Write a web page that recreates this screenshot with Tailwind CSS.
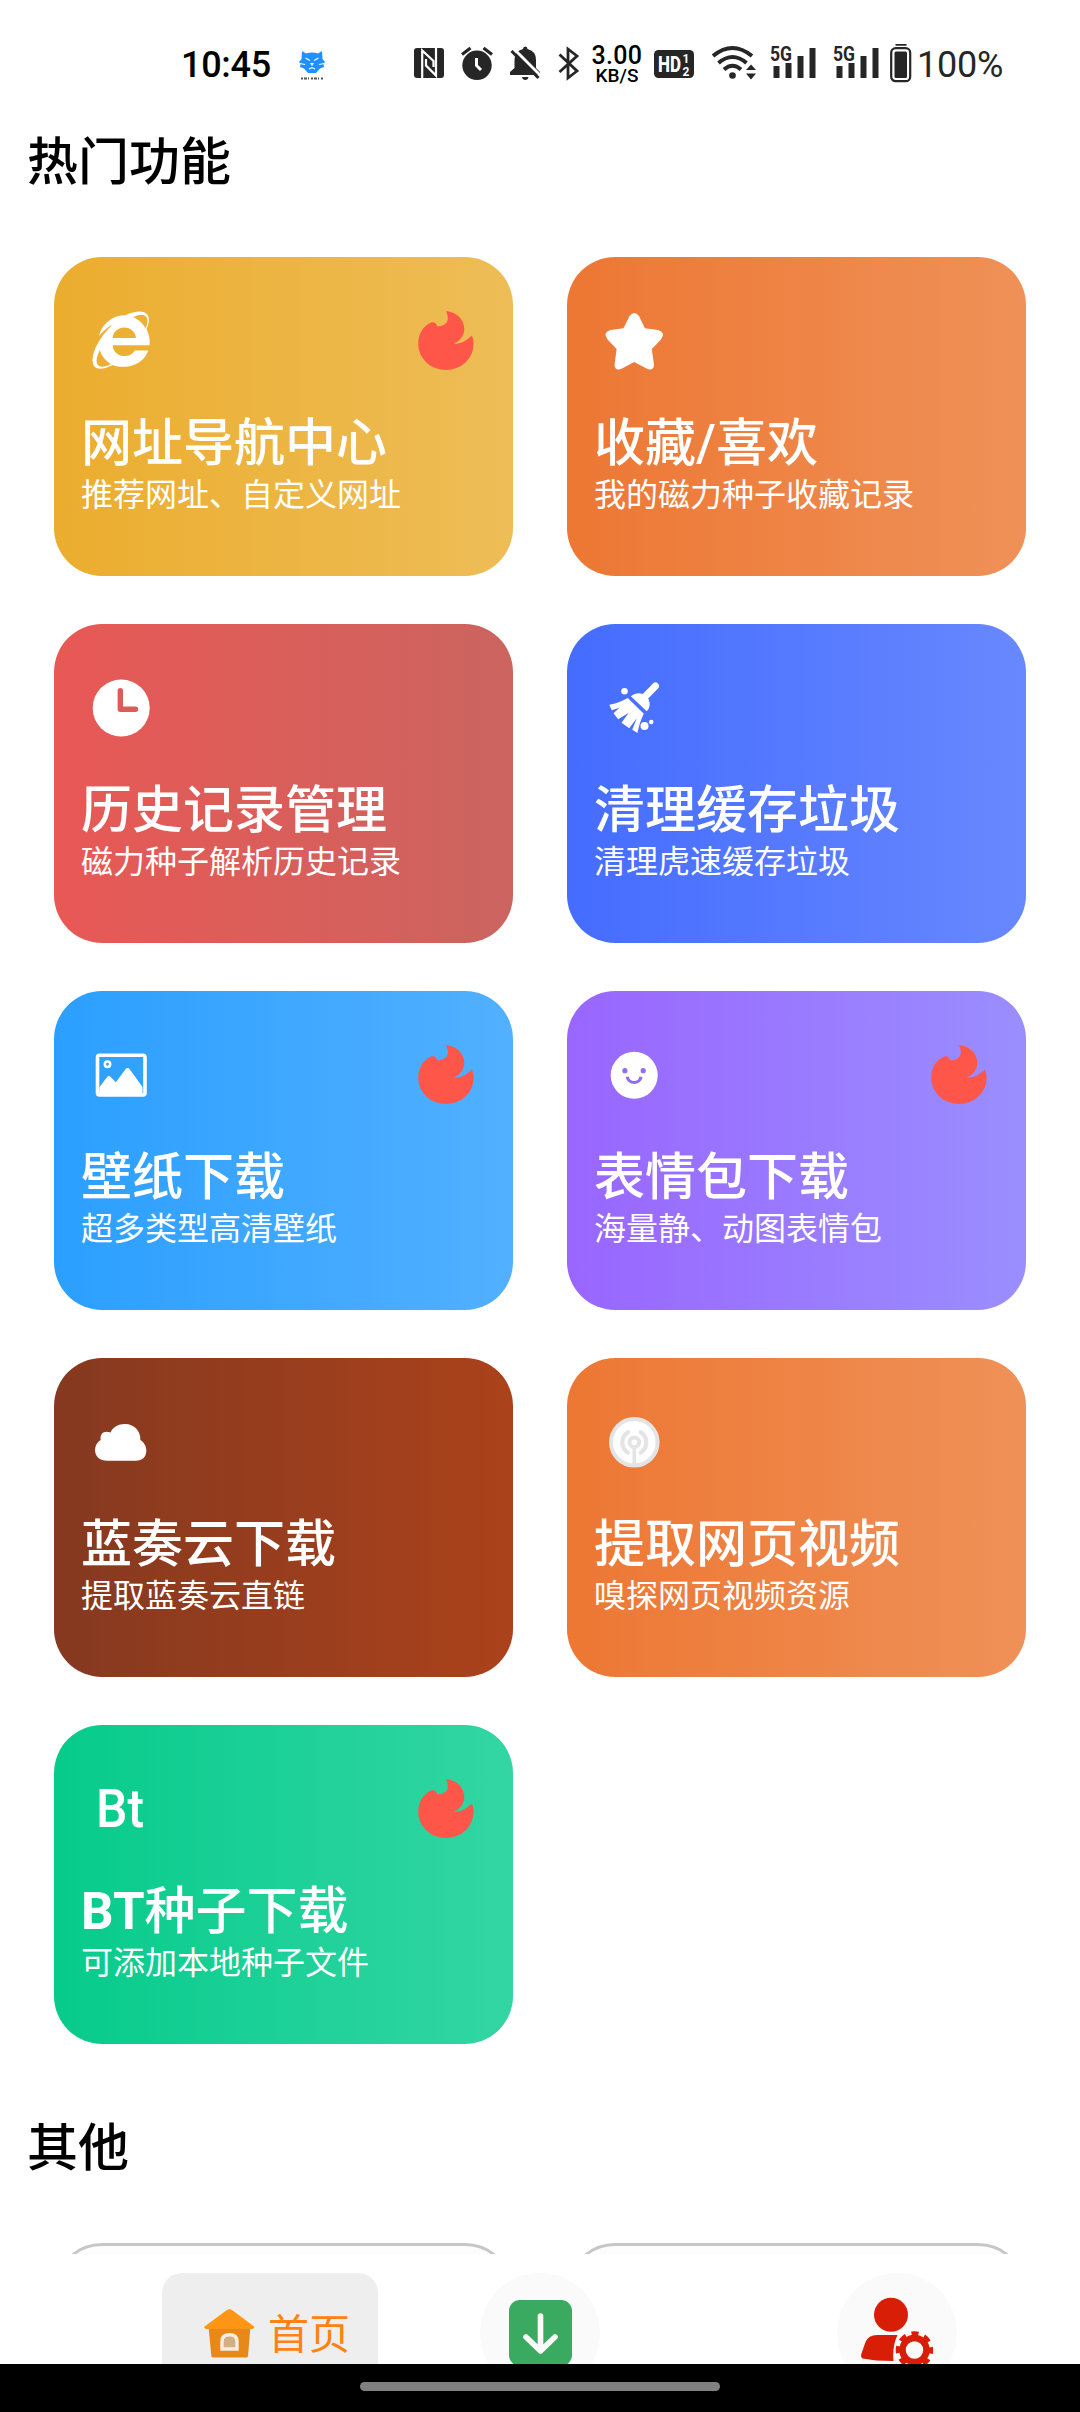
<!DOCTYPE html>
<html lang="zh-CN">

<head>
    <meta charset="UTF-8">
    <meta name="viewport" content="width=device-width, initial-scale=1.0">
    <title>热门功能</title>
    <script src="https://cdn.jsdelivr.net/npm/@tailwindcss/browser@4"></script>
</head>

<body class="h-[2412px] w-[1080px] flex flex-col overflow-hidden bg-white text-black font-['Roboto','Noto_Sans_CJK_SC',sans-serif]">

    <!-- shared flame badge -->
    <svg class="hidden">
        <symbol id="fire" viewBox="0 0 72 72">
            <path fill="#ff564a" d="M36 6C47 7 54.3 15 54.3 24C54.3 31 49 37 43.3 38.6C51 39.5 57 35 61.9 30.5C63 33 63.6 36 63.6 39A27.7 26 0 0 1 8.2 39C8.2 29 13 21 21.6 17.3C24.5 16.8 26.5 18 27 21.3C33 21.5 37.5 18.5 37.8 14C38 11 37 8.5 36 6Z" />
        </symbol>
    </svg>

    <!-- status bar -->
    <header class="h-32 shrink-0 flex items-center pl-[181px] text-[#262626]">
        <span class="w-[118px] pt-0.5 text-[36px] leading-10 tracking-[-0.3px] font-medium text-black">10:45</span>
        <svg class="w-[26px] h-10" viewBox="0 0 26 40">
            <path fill="#1e90ff" d="M3 7L7 9.500Q13 7.500 19 9.500L23 7L23.500 15L26 18L24.500 19.500L25 23L21 24.500L17 29H9L5 24.500L1 23L1.500 19.500L0 18L2.500 15Z" />
            <path fill="none" stroke="#fff" stroke-width="1.100" d="M6.500 14L11 16.500M19.500 14L15 16.500M1 19.500L6 20.500M25 19.500L20 20.500M10 25L13 23.500L16 25" />
            <path fill="#fff" d="M11 19H15L13 22Z" />
            <path stroke="#555" stroke-width="2" stroke-dasharray="2 1 3 1 1 2" d="M2 34.500H24" />
        </svg>
        <svg class="w-[30px] h-10 ml-[89px]" viewBox="0 0 30 40">
            <rect y="4" width="30" height="30" rx="3" fill="currentColor" />
            <path fill="none" stroke="#fff" stroke-width="2.200" d="M8.200 34V6.500L19.500 17V23M22 4V31.500L12 21.500V15" />
        </svg>
        <svg class="w-[32px] h-10 ml-[17px]" viewBox="0 0 32 40">
            <circle cx="16" cy="21.300" r="14.700" fill="currentColor" />
            <path stroke="currentColor" stroke-width="3.200" d="M1 10.500L9.500 4M31 10.500L22.500 4" />
            <path fill="none" stroke="#fff" stroke-width="3" d="M15.500 14V21.500L20 26" />
        </svg>
        <svg class="w-[31px] h-10 ml-[17px]" viewBox="0 0 31 40">
            <path fill="currentColor" d="M13 5Q13 2.500 15.300 2.500T17.500 5Q26 7 26 16V24L30 28V31H0V28L4.500 24V16Q4.500 7 13 5ZM12 33H18.500Q18 36 15.300 36T12 33Z" />
            <path stroke="#fff" stroke-width="3" d="M4 5L31 32" />
            <path stroke="currentColor" stroke-width="3" d="M1.500 7L28.500 34" />
        </svg>
        <svg class="w-[22px] h-10 ml-[17px]" viewBox="0 0 22 40">
            <path fill="none" stroke="currentColor" stroke-width="2.800" d="M1.500 10.500L19 27L10 34V5L19 12L1.500 28" />
        </svg>
        <div class="ml-[11px] mr-px w-[52px] pt-0.5 flex flex-col items-center font-medium text-black">
            <span class="text-[25px] leading-[21px] tracking-[0.3px]">3.00</span>
            <span class="text-[19px] leading-[19px]">KB/S</span>
        </div>
        <svg class="w-10 h-10 ml-[10px]" viewBox="0 0 40 40">
            <rect y="6" width="40" height="28" rx="4.500" fill="currentColor" />
            <text x="4" y="28" font-size="22" font-weight="800" fill="#fff" textLength="23" lengthAdjust="spacingAndGlyphs">HD</text>
            <text x="28.500" y="19" font-size="12" font-weight="700" fill="#fff">1</text>
            <text x="28.500" y="31.500" font-size="12" font-weight="700" fill="#fff">2</text>
        </svg>
        <svg class="w-11 h-10 ml-[18px]" viewBox="0 0 44 40">
            <path fill="none" stroke="currentColor" stroke-width="4" d="M1 12Q20.500 -4 40 12M6.500 19Q20.500 7 34.500 19M12 25.500Q20.500 18 29 25.500" />
            <circle cx="20.500" cy="31.500" r="3.300" fill="currentColor" />
            <path fill="currentColor" d="M34 26L39 20.500L44 26ZM34 29.500H44L39 35.500Z" />
        </svg>
        <svg class="w-[47px] h-10 ml-[14px] overflow-visible" viewBox="0 0 47 40">
            <text x="0" y="17" font-size="21" font-weight="700" fill="currentColor" textLength="22" lengthAdjust="spacingAndGlyphs">5G</text>
            <path stroke="currentColor" stroke-width="6" d="M6.500 22V34M18.500 19V34M30.500 12V34M42.500 4V34" />
        </svg>
        <svg class="w-[47px] h-10 ml-4 overflow-visible" viewBox="0 0 47 40">
            <text x="0" y="17" font-size="21" font-weight="700" fill="currentColor" textLength="22" lengthAdjust="spacingAndGlyphs">5G</text>
            <path stroke="currentColor" stroke-width="6" d="M6.500 22V34M18.500 19V34M30.500 12V34M42.500 4V34" />
        </svg>
        <svg class="w-[22px] h-10 ml-[10px]" viewBox="0 0 22 40">
            <path stroke="currentColor" stroke-width="2.500" d="M5.500 .5H16.500" />
            <rect x="1.200" y="4.200" width="19" height="33" rx="4.500" fill="none" stroke="currentColor" stroke-width="2.200" />
            <rect x="4.500" y="7.500" width="12.500" height="26.500" rx="1.500" fill="currentColor" />
        </svg>
        <span class="ml-[5px] pt-0.5 text-[36px] leading-10 tracking-[-0.2px]">100%</span>
    </header>

    <main class="flex-1 min-h-0 overflow-hidden">
        <h1 class="h-16 pt-[3px] pl-[27px] text-[51px] leading-16 font-medium">热门功能</h1>

        <div class="mt-[65px] px-[54px] grid grid-cols-2 gap-x-[54px] gap-y-12 text-white">

            <div class="h-[319px] rounded-[48px] pt-12 bg-linear-to-r/srgb from-[#ebad2e] to-[#eebd57]">
                <div class="flex justify-between px-[31px]">
                    <svg class="size-[72px]" viewBox="0 0 72 72">
                        <path fill="#fff" transform="translate(7.500 6.500) scale(.1118)" d="M483.049 159.706c10.855-24.575 21.424-60.438 21.424-87.871 0-72.722-79.641-98.371-209.673-38.577-107.632-7.181-211.221 73.670-237.098 186.457 30.852-34.862 78.271-82.298 121.977-101.158C125.404 166.850 79.128 228.002 43.992 291.725 23.246 329.651 0 390.940 0 436.747c0 98.575 92.854 86.500 180.251 42.006 31.423 15.430 66.559 15.573 101.695 15.573 97.124 0 184.249-54.294 216.814-146.022H377.927c-52.509 88.593-196.819 52.996-196.819-47.436H509.900c6.407-43.581-1.655-95.715-26.851-141.162zM64.559 346.877c17.711 51.150 53.703 95.871 100.266 123.304-88.741 48.940-173.267 29.096-100.266-123.304zm115.977-108.873c2-55.152 50.276-94.871 103.980-94.871 53.418 0 101.981 39.720 103.981 94.871H180.536zm184.536-187.600c21.425-10.287 48.563-22.003 72.558-22.003 31.422 0 54.274 21.717 54.274 53.722 0 20.003-7.427 49.007-14.569 67.867-26.280-42.292-65.986-81.584-112.263-99.586z" />
                    </svg>
                    <svg class="size-[72px]"><use href="#fire" /></svg>
                </div>
                <h2 class="mt-[39px] pl-[27px] text-[51px] leading-14 font-medium">网址导航中心</h2>
                <p class="-mt-px pl-[27px] text-[32px] leading-12">推荐网址、自定义网址</p>
            </div>

            <div class="h-[319px] rounded-[48px] pt-12 bg-linear-to-r/srgb from-[#ed7733] to-[#ef9158]">
                <div class="flex justify-between px-[31px]">
                    <svg class="size-[72px]" viewBox="0 0 72 72">
                        <path fill="#fff" d="M25.500 23.300L31.500 11Q36.200 5 41 11L46.900 23.300L60 25Q68 27.500 63 34.500L53.800 44L56 60Q55.500 66.500 48.500 63.500L36.200 57L24 63.500Q17 66.500 16.500 60L18.600 44L9.500 34.500Q4.500 27.500 12.500 25Z" />
                    </svg>
                </div>
                <h2 class="mt-[39px] pl-[27px] text-[51px] leading-14 font-medium">收藏/喜欢</h2>
                <p class="-mt-px pl-[27px] text-[32px] leading-12">我的磁力种子收藏记录</p>
            </div>

            <div class="h-[319px] rounded-[48px] pt-12 bg-linear-to-r/srgb from-[#e85855] to-[#cb645f]">
                <div class="flex justify-between px-[31px]">
                    <svg class="size-[72px]" viewBox="0 0 72 72">
                        <circle cx="36.200" cy="36" r="28.500" fill="#fff" />
                        <path fill="none" stroke="#dc5c58" stroke-width="5.400" stroke-linecap="round" stroke-linejoin="round" d="M35.300 18.700V37.300H50.500" />
                    </svg>
                </div>
                <h2 class="mt-[39px] pl-[27px] text-[51px] leading-14 font-medium">历史记录管理</h2>
                <p class="-mt-px pl-[27px] text-[32px] leading-12">磁力种子解析历史记录</p>
            </div>

            <div class="h-[319px] rounded-[48px] pt-12 bg-linear-to-r/srgb from-[#446cff] to-[#6888ff]">
                <div class="flex justify-between px-[31px]">
                    <svg class="size-[72px]" viewBox="0 0 72 72" fill="#fff">
                        <path stroke="#fff" stroke-width="7" stroke-linecap="round" d="M57.500 14L46.500 25.300" />
                        <path d="M32.800 24.300Q38 19.500 45 22L50.500 27.300Q53.500 34 48.800 39.300Z" />
                        <path d="M29.800 26L45.800 41.700Q41.500 50 39.500 61L34.200 57.700L38.800 46.300L31.200 56.300L23.500 50.700L30.800 40.700L20.200 47.300L15.500 41.300L21.500 35.700L13.800 38.300L11.200 32.700Q21 31 29.800 26Z" />
                        <circle cx="26.500" cy="19.300" r="3.300" />
                        <circle cx="46.500" cy="54" r="4" />
                        <circle cx="53.200" cy="50" r="2.300" />
                    </svg>
                </div>
                <h2 class="mt-[39px] pl-[27px] text-[51px] leading-14 font-medium">清理缓存垃圾</h2>
                <p class="-mt-px pl-[27px] text-[32px] leading-12">清理虎速缓存垃圾</p>
            </div>

            <div class="h-[319px] rounded-[48px] pt-12 bg-linear-to-r/srgb from-[#2b9fff] to-[#52b0ff]">
                <div class="flex justify-between px-[31px]">
                    <svg class="size-[72px]" viewBox="0 0 72 72">
                        <rect x="12.500" y="16.300" width="47.500" height="39.700" rx="2" fill="none" stroke="#fff" stroke-width="3.600" />
                        <circle cx="22.500" cy="25.300" r="2.700" fill="none" stroke="#fff" stroke-width="2.500" />
                        <path fill="#fff" d="M14.500 48L22.200 38Q24 36 25.700 38L30.800 43.300L40.500 30.300Q42.500 27.500 44.700 30.300L57.500 48V56H14Z" />
                    </svg>
                    <svg class="size-[72px]"><use href="#fire" /></svg>
                </div>
                <h2 class="mt-[39px] pl-[27px] text-[51px] leading-14 font-medium">壁纸下载</h2>
                <p class="-mt-px pl-[27px] text-[32px] leading-12">超多类型高清壁纸</p>
            </div>

            <div class="h-[319px] rounded-[48px] pt-12 bg-linear-to-r/srgb from-[#9966ff] to-[#9a8eff]">
                <div class="flex justify-between px-[31px]">
                    <svg class="size-[72px]" viewBox="0 0 72 72">
                        <circle cx="36.200" cy="36.300" r="23.500" fill="#fff" />
                        <g fill="#926eee">
                            <circle cx="26.900" cy="31.700" r="2.600" />
                            <circle cx="45.200" cy="31.700" r="2.600" />
                        </g>
                        <path fill="none" stroke="#926eee" stroke-width="3.200" d="M29.300 37.700A6.900 6.600 0 0 0 43 37.700" />
                    </svg>
                    <svg class="size-[72px]"><use href="#fire" /></svg>
                </div>
                <h2 class="mt-[39px] pl-[27px] text-[51px] leading-14 font-medium">表情包下载</h2>
                <p class="-mt-px pl-[27px] text-[32px] leading-12">海量静、动图表情包</p>
            </div>

            <div class="h-[319px] rounded-[48px] pt-12 bg-linear-to-r/srgb from-[#853920] to-[#ab421b]">
                <div class="flex justify-between px-[31px]">
                    <svg class="size-[72px]" viewBox="0 0 72 72">
                        <path fill="#fff" d="M22 54.700C8 54.700 7 39 15.700 34C14.500 28 19 24 25.500 26.500C28 21 33 18 40 18C50 18 56 26 55.300 34C64 39 64 54.700 51 54.700Z" />
                    </svg>
                </div>
                <h2 class="mt-[39px] pl-[27px] text-[51px] leading-14 font-medium">蓝奏云下载</h2>
                <p class="-mt-px pl-[27px] text-[32px] leading-12">提取蓝奏云直链</p>
            </div>

            <div class="h-[319px] rounded-[48px] pt-12 bg-linear-to-r/srgb from-[#ed7733] to-[#ef9158]">
                <div class="flex justify-between px-[31px]">
                    <svg class="size-[72px]" viewBox="0 0 72 72" fill="none" stroke="#e4e4e4">
                        <circle cx="36.300" cy="36.300" r="23.300" fill="#fff" stroke-width="4" />
                        <circle cx="36.300" cy="36.300" r="4.800" stroke-width="4" />
                        <path stroke-width="3.800" d="M36.300 41V59" />
                        <path stroke-width="4.200" stroke-linecap="round" d="M30 26.300A12 12 0 0 0 30 46.700M42.600 26.300A12 12 0 0 1 42.600 46.700" />
                    </svg>
                </div>
                <h2 class="mt-[39px] pl-[27px] text-[51px] leading-14 font-medium">提取网页视频</h2>
                <p class="-mt-px pl-[27px] text-[32px] leading-12">嗅探网页视频资源</p>
            </div>

            <div class="h-[319px] rounded-[48px] pt-12 bg-linear-to-r/srgb from-[#06cb8b] to-[#33d6a3]">
                <div class="flex justify-between px-[31px]">
                    <svg class="size-[72px]" viewBox="0 0 72 72">
                        <text x="11" y="53.500" font-size="54" font-weight="500" fill="#fff" textLength="48" lengthAdjust="spacingAndGlyphs">Bt</text>
                    </svg>
                    <svg class="size-[72px]"><use href="#fire" /></svg>
                </div>
                <h2 class="mt-[39px] pl-[27px] text-[51px] leading-14 font-medium"><span class="font-bold">BT</span>种子下载</h2>
                <p class="-mt-px pl-[27px] text-[32px] leading-12">可添加本地种子文件</p>
            </div>
        </div>

        <h1 class="mt-[70px] h-16 pt-[3px] pl-[27px] text-[51px] leading-16 font-medium">其他</h1>

        <div class="mt-[65px] px-[54px] grid grid-cols-2 gap-x-[54px]">
            <div class="h-[319px] rounded-[48px] border-3 border-[#c6c6c6] bg-[#fcfcfc]"></div>
            <div class="h-[319px] rounded-[48px] border-3 border-[#c6c6c6] bg-[#fcfcfc]"></div>
        </div>
    </main>

    <!-- tab bar, cut off by the gesture area -->
    <nav class="h-[110px] shrink-0 flex items-start pt-[19px] pl-[162px] overflow-hidden bg-white">
        <div class="w-[216px] h-[120px] shrink-0 flex items-center rounded-[20px] pl-[42px] bg-[#eee]">
            <svg class="w-[51px] h-[50px]" viewBox="0 0 51 50">
                <path fill="#e78818" d="M4.500 18H46.500L44 48Q44 49.500 42 49.500H9.500Q7.500 49.500 7.300 48Z" />
                <path fill="#ff9514" d="M23 2Q25.500 .3 28 2L50 18.500Q51 21 48 21H2.500Q-.5 21 .5 18.500Z" />
                <path fill="#d3ae82" stroke="#f6ece0" stroke-width="3.400" d="M18 41V33.500Q18 26.800 25.500 26.800T33 33.500V41Z" />
            </svg>
            <span class="ml-[13px] pt-1 text-[41px] leading-[50px] text-[#ff8212]">首页</span>
        </div>
        <div class="ml-[102px] size-[120px] shrink-0 flex items-center justify-center rounded-full bg-[#fafafa]">
            <svg class="w-[63px] h-[66px]" viewBox="0 0 63 66">
                <rect width="63" height="66" rx="11" fill="#39aa60" />
                <path fill="none" stroke="#fafafa" stroke-width="5.600" stroke-linecap="round" stroke-linejoin="round" d="M31.500 16V50M17 37L31.500 51L46 37" />
            </svg>
        </div>
        <div class="ml-[237px] size-[120px] shrink-0 flex items-center justify-center rounded-full bg-[#fafafa]">
            <svg class="size-[72px]" viewBox="0 0 72 72" fill="#d81e06">
                <circle cx="30" cy="17.700" r="17" />
                <path d="M16 38H36.500Q31 50 32.500 64Q14 64 1.500 61.500Q-.5 60.500 .3 57L4.500 45Q7.500 38 16 38Z" />
                <circle cx="53.500" cy="53" r="12" fill="none" stroke="#d81e06" stroke-width="6.500" />
                <circle cx="53.500" cy="53" r="16.300" fill="none" stroke="#d81e06" stroke-width="5" stroke-dasharray="7 5.802" stroke-dashoffset="3.500" />
            </svg>
        </div>
    </nav>

    <footer class="h-12 shrink-0 flex items-start justify-center pt-[18px] bg-black">
        <div class="w-[360px] h-[9px] rounded-full bg-[#808080]"></div>
    </footer>
</body>

</html>
